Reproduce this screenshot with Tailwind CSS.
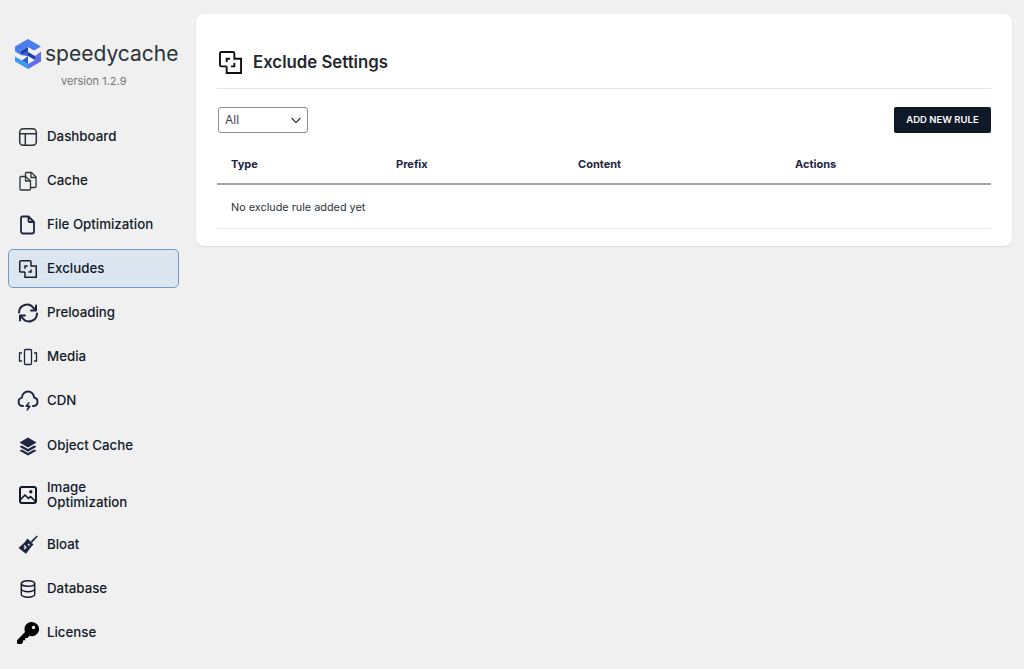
<!DOCTYPE html>
<html lang="en">
  <head>
    <meta charset="UTF-8" />
    <meta name="viewport" content="width=device-width, initial-scale=1.0" />
    <title>SpeedyCache - Excludes</title>
    <script src="https://cdn.jsdelivr.net/npm/@tailwindcss/browser@4"></script>
  </head>
  <body class="w-[1024px] h-[669px] overflow-hidden bg-[#f0f0f1] text-[#111827] font-['Inter',sans-serif] flex">
    <!-- sidebar -->
    <aside class="w-[196px] shrink-0 pl-[8px] pr-[17px]">
      <div class="h-[117px] pt-[38px]">
        <div class="flex items-center gap-[4px] pl-[7px] h-[31px]">
          <svg class="w-[26px] h-[30px] shrink-0" viewBox="0 0 26 30">
            <path d="M13 0 26 7.500 19 11.500 13 8 6 12 6 16 0 12.500 0 7.500Z" fill="#4a7df0" />
            <path d="M0 17.500 7 21.500 13 25 13 30 0 22.500Z" fill="#3f9bf2" />
            <path d="M26 12.500 26 22.500 13 30 13 25 20 21 20 17Z" fill="#5f6df0" />
            <path d="M6 12 13 8 13 13 20 17 20 21 13 17 13 12.500 6 16Z" fill="#1d3fa8" />
            <path d="M6 16 13 12.500 13 17 13 25 7 21.500 13 17Z" fill="#2b5fd9" />
          </svg>
          <span class="text-[21px] leading-[30px] text-[#2c3338]">speedycache</span>
        </div>
        <p class="pl-[53px] mt-[4px] text-[11px] leading-[16px] text-[#757575]">version 1.2.9</p>
      </div>

      <nav class="flex flex-col gap-[5px] text-[13.300px] leading-[15px] font-medium">
        <a class="h-[39px] flex items-center gap-[9px] px-[10px]">
          <svg class="w-[20px] h-[20px] shrink-0" viewBox="0 0 20 20" fill="none" stroke="#2c3338" stroke-width="1.500">
            <rect x="1.700" y="1.700" width="16.600" height="16.600" rx="3.500" />
            <path d="M1.700 6.700h16.600M7.300 6.700v11.600" />
          </svg>
          <span>Dashboard</span>
        </a>
        <a class="h-[39px] flex items-center gap-[9px] px-[10px]">
          <svg class="w-[20px] h-[20px] shrink-0" viewBox="0 0 20 20" fill="none" stroke="#2c3338" stroke-width="1.300" stroke-linejoin="round">
            <path d="M7.500 5.500H3a1 1 0 0 0-1 1V18a1 1 0 0 0 1 1h8.500a1 1 0 0 0 1-1v-1.500" />
            <path d="M7.500 5.500 12.500 10v6.500H17a1 1 0 0 0 1-1V6l-4.500-4.500H8.500a1 1 0 0 0-1 1v3" />
            <path d="M13 2v4.500h5M7.500 5.500V10h5" />
          </svg>
          <span>Cache</span>
        </a>
        <a class="h-[39px] flex items-center gap-[9px] px-[10px]">
          <svg class="w-[20px] h-[20px] shrink-0" viewBox="0 0 20 20" fill="none" stroke="#1d2540" stroke-width="1.800" stroke-linejoin="round">
            <path d="M4.500 1.500h6l5.500 5.500v9.500a2 2 0 0 1-2 2H5a2 2 0 0 1-2-2V3a1.500 1.500 0 0 1 1.500-1.500Z" />
            <path d="M10.500 1.500V6a1 1 0 0 0 1 1H16" />
          </svg>
          <span>File Optimization</span>
        </a>
        <a class="h-[39px] flex items-center gap-[10px] pl-[10px] pr-[9px] bg-[#dce6f0] border border-[#6f9ac4] rounded-[5px]">
          <svg class="w-[18px] h-[18px] shrink-0" viewBox="0 0 24 24" fill="none" stroke="#1e1e1e" stroke-width="2">
            <path d="M8 16H2.500A1.500 1.500 0 0 1 1 14.500v-12A1.500 1.500 0 0 1 2.500 1h12A1.500 1.500 0 0 1 16 2.500V8h7v15H8v-7" />
            <path d="M8 11.500V8h3.500M12.500 16H16v-3.500" />
          </svg>
          <span>Excludes</span>
        </a>
        <a class="h-[39px] flex items-center gap-[9px] px-[10px]">
          <svg class="w-[20px] h-[20px] shrink-0" viewBox="0 0 20 20" fill="none" stroke="#1d2540" stroke-width="2" stroke-linecap="round" stroke-linejoin="round">
            <path d="M1 9.500A8 8 0 0 1 15.500 5l2 2" />
            <path d="M18 2.500V7.500h-5" />
            <path d="M19 10.500A8 8 0 0 1 4.500 15l-2-2" />
            <path d="M2 17.500V12.500h5" />
          </svg>
          <span>Preloading</span>
        </a>
        <a class="h-[39px] flex items-center gap-[9px] px-[10px]">
          <svg class="w-[20px] h-[20px] shrink-0" viewBox="0 0 20 20" fill="none" stroke="#1d2540" stroke-width="1.300">
            <rect x="6.500" y="2.500" width="7" height="15" rx="1" />
            <path d="M4 6H1.500v8H4M16 6h2.500v8H16" />
          </svg>
          <span>Media</span>
        </a>
        <a class="h-[39px] flex items-center gap-[9px] px-[10px]">
          <svg class="w-[20px] h-[20px] shrink-0 scale-110" viewBox="0 0 20 20" fill="none" stroke="#1d2540" stroke-width="1.700" stroke-linecap="round" stroke-linejoin="round">
            <path d="M5.500 14.500H4.800A3.800 3.800 0 0 1 4.500 7 5.500 5.500 0 0 1 15.500 6.800a3.900 3.900 0 0 1-.3 7.700h-.7" />
            <path d="M10.800 11.500 8.200 14.800h3.600L9.200 18.200" stroke-width="1.200" fill="#1d2540" />
          </svg>
          <span>CDN</span>
        </a>
        <a class="h-[39px] mt-[1px] flex items-center gap-[9px] px-[10px]">
          <svg class="w-[20px] h-[20px] shrink-0" viewBox="0 0 20 20" fill="#1d2540">
            <path d="M10 1.500 18.500 6.500 10 11.500 1.500 6.500Z" />
            <path d="M3.800 9.500 1.500 10.800 10 15.800 18.500 10.800 16.200 9.500 10 13.100Z" />
            <path d="M3.800 13.500 1.500 14.800 10 19.500 18.500 14.800 16.200 13.500 10 17Z" />
          </svg>
          <span>Object Cache</span>
        </a>
        <a class="h-[50px] flex items-center gap-[9px] px-[10px]">
          <svg class="w-[20px] h-[20px] shrink-0" viewBox="0 0 20 20" fill="none" stroke="#111827" stroke-width="2" stroke-linejoin="round">
            <rect x="2" y="2" width="16" height="16" rx="2" />
            <path d="M2.500 14.500 7 10l3.500 3.500 2-2 5 5" stroke-width="1.700" />
            <circle cx="12.800" cy="6.800" r="1.700" fill="#111827" stroke="none" />
          </svg>
          <span>Image<br />Optimization</span>
        </a>
        <a class="h-[39px] flex items-center gap-[9px] px-[10px]">
          <svg class="w-[20px] h-[20px] shrink-0" viewBox="0 0 20 20" fill="#1d2540">
            <path d="M12.500 6.500 18.800.500 19.800 1.500 14 7.800Z" />
            <path d="M9.500 3.500 15.500 9.500 13.500 11.500 8 18.800 .500 13 6.500 7.500Z" />
            <path d="M6 10.500 8 12.500 6 14M10 9l1.500 1.500" fill="none" stroke="#f0f0f1" stroke-width="1.300" />
          </svg>
          <span>Bloat</span>
        </a>
        <a class="h-[39px] flex items-center gap-[9px] px-[10px]">
          <svg class="w-[20px] h-[20px] shrink-0" viewBox="0 0 20 20" fill="none" stroke="#111827" stroke-width="1.400">
            <ellipse cx="10" cy="4.500" rx="6.700" ry="2.800" />
            <path d="M3.300 4.500v11c0 1.500 3 2.800 6.700 2.800s6.700-1.300 6.700-2.800v-11" />
            <path d="M3.300 10c0 1.500 3 2.800 6.700 2.800s6.700-1.300 6.700-2.800" />
          </svg>
          <span>Database</span>
        </a>
        <a class="h-[39px] flex items-center gap-[9px] px-[10px]">
          <svg class="w-[20px] h-[20px] shrink-0 scale-110" viewBox="0 0 20 20" fill="#000">
            <path d="M13.500 0a6.500 6.500 0 1 1-2.200 12.600L9.500 14.500H7.500v2H5.500v2L4 20H1a1 1 0 0 1-1-1v-2.500L7.300 9A6.500 6.500 0 0 1 13.500 0Z" />
            <circle cx="15" cy="5" r="1.500" fill="#f0f0f1" />
          </svg>
          <span>License</span>
        </a>
      </nav>
    </aside>

    <!-- main card -->
    <main class="w-[816px] h-[232px] mt-[14px] bg-white rounded-[8px] shadow-[0_1px_2px_rgba(0,0,0,0.08)] px-[21px]">
      <div class="h-[75px] pt-[37px] flex items-start gap-[11px] border-b border-[#e5e5e5] pl-[2px]">
        <svg class="w-[23px] h-[23px] shrink-0" viewBox="0 0 24 24" fill="none" stroke="#111" stroke-width="2">
          <path d="M8 16H2.500A1.500 1.500 0 0 1 1 14.500v-12A1.500 1.500 0 0 1 2.500 1h12A1.500 1.500 0 0 1 16 2.500V8h7v15H8v-7" />
          <path d="M8 11.500V8h3.500M12.500 16H16v-3.500" />
        </svg>
        <h1 class="text-[16.800px] leading-[23px] font-semibold text-[#23282d]">Exclude Settings</h1>
      </div>

      <div class="mt-[18px] h-[26px] flex justify-between items-center">
        <div class="ml-[1px] w-[90px] h-[26px] border border-[#8c8f94] rounded-[3px] flex items-center justify-between pl-[6px] pr-[5px] text-[12px] text-[#3c434a]">
          <span>All</span>
          <svg class="w-[12px] h-[12px]" viewBox="0 0 12 12" fill="none" stroke="#3c434a" stroke-width="1.300"><path d="M1.500 4 6 8.500 10.500 4" /></svg>
        </div>
        <button class="w-[97px] h-[26px] bg-[#111827] rounded-[2px] text-white text-[9.500px] font-semibold">ADD NEW RULE</button>
      </div>

      <div class="h-[52px] grid grid-cols-[165px_182px_217px_1fr] items-end pb-[11px] pl-[14px] border-b-2 border-[#a5a5a5] text-[11px] font-bold text-[#1d2540]">
        <span>Type</span>
        <span>Prefix</span>
        <span>Content</span>
        <span>Actions</span>
      </div>
      <div class="h-[44px] flex items-center pl-[14px] pt-[1px] border-b border-[#e8e8e8] text-[10.850px] text-[#2c3338]">No exclude rule added yet</div>
    </main>
  </body>
</html>
